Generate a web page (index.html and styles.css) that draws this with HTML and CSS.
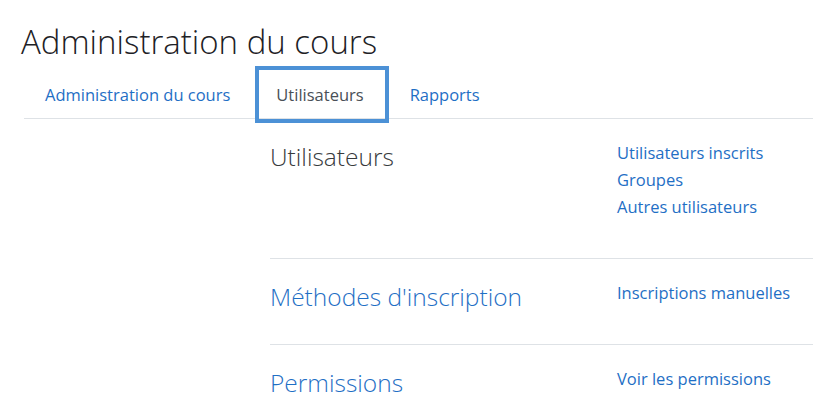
FILE: index.html
```html
<!DOCTYPE html>
<html lang="fr">
<head>
    <meta charset="UTF-8" />
    <title>Administration du cours</title>
    <link rel="stylesheet" href="styles.css">
</head>
<body>
    <div class="page">
        <h1 class="page-title">Administration du cours</h1>
        <ul class="tabs">
            <li><a href="#" class="tab">Administration du cours</a></li>
            <li><a href="#" class="tab active">Utilisateurs</a></li>
            <li><a href="#" class="tab">Rapports</a></li>
        </ul>
        <div class="layout">
            <div class="side"></div>
            <div class="sections">
                <div class="section">
                    <h3 class="section-title">Utilisateurs</h3>
                    <ul class="links">
                        <li><a href="#">Utilisateurs inscrits</a></li>
                        <li><a href="#">Groupes</a></li>
                        <li><a href="#">Autres utilisateurs</a></li>
                    </ul>
                </div>
                <div class="section">
                    <h3 class="section-title"><a href="#">Méthodes d'inscription</a></h3>
                    <ul class="links">
                        <li><a href="#">Inscriptions manuelles</a></li>
                    </ul>
                </div>
                <div class="section">
                    <h3 class="section-title"><a href="#">Permissions</a></h3>
                    <ul class="links">
                        <li><a href="#">Voir les permissions</a></li>
                    </ul>
                </div>
            </div>
        </div>
    </div>
</body>
</html>
```

FILE: styles.css
```css
body {
    margin: 0;
    background: #fff;
    color: #1d2125;
    font-family: 'Open Sans', 'Noto Sans', sans-serif;
    font-size: 16.5px;
}
a {
    color: #1f6fc5;
    text-decoration: none;
}
.page {
    padding: 0 0 0 24px;
    overflow: hidden;
}
.page-title {
    font-weight: 300;
    font-size: 33px;
    line-height: 40px;
    margin: 22px 0 4px -3px;
    color: #1d2125;
}
.tabs {
    list-style: none;
    margin: 0;
    padding: 0;
    display: flex;
    border-bottom: 1px solid #dee2e6;
}
.tab {
    display: block;
    padding: 11px 21px 11px 17px;
    line-height: 27px;
    border: 4px solid transparent;
    margin-bottom: -5px;
}
.tab.active {
    color: #495057;
    border-color: #4c91d6;
}
.layout {
    display: grid;
    grid-template-columns: 246px 1fr;
}
.section {
    display: grid;
    grid-template-columns: 347px 1fr;
    align-items: start;
    padding: 20px 0 38px;
    border-bottom: 1px solid #dee2e6;
}
.section-title {
    margin: 4px 0 -4px;
    font-weight: 300;
    font-size: 24.5px;
    line-height: 27px;
    color: #373a3c;
}
.links {
    list-style: none;
    margin: 0;
    padding: 0;
    line-height: 27px;
}
```
